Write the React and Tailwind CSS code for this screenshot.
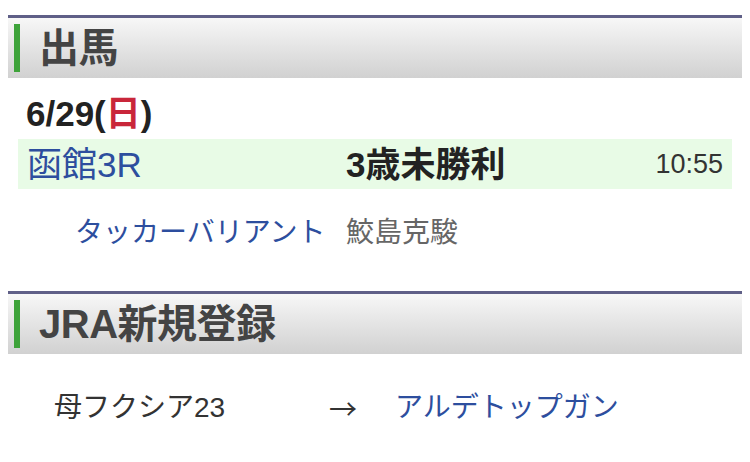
import React from 'react';

const jp = { fontFamily: '"Liberation Sans", "Noto Sans CJK JP", sans-serif' };

function SectionHeader({ title }) {
  return (
    <div className="h-[63px] border-t-[3px] border-[#5f5f87] bg-gradient-to-b from-[#f7f7f7] to-[#d1d1d1] flex items-center">
      <div className="ml-[6px] w-[6px] h-[48px] bg-[#3ea33a]" />
      <h2 className="ml-[19px] text-[40px] leading-none font-bold text-[#444444] tracking-[-0.5px]">{title}</h2>
    </div>
  );
}

export default function App() {
  return (
    <div className="w-[750px] h-[462px] bg-white pt-[15px] px-2 overflow-hidden" style={jp}>
      {/* 出馬 */}
      <SectionHeader title="出馬" />
      <div className="pl-[18px] pt-[16px] pb-[5px] text-[35px] leading-[40px] font-bold text-[#222222]">
        6/29(<span className="text-[#c9263a]">日</span>)
      </div>
      <div className="mx-[10px] h-[50px] bg-[#e8fbe6] flex items-center">
        <a className="w-[328px] pl-[9px] text-[35px] leading-none text-[#2d4e9e]">函館3R</a>
        <span className="flex-1 text-[35px] leading-none font-bold text-[#222222]">3歳未勝利</span>
        <span className="pr-[9px] text-[27px] leading-none text-[#333333]">10:55</span>
      </div>
      <div className="mx-[10px] pt-[24px] flex items-center leading-[40px]">
        <a className="w-[328px] pl-[57px] text-[28px] text-[#2d4e9e]">タッカーバリアント</a>
        <span className="text-[28px] text-[#666666]">鮫島克駿</span>
      </div>

      {/* JRA新規登録 */}
      <div className="mt-[38px]">
        <SectionHeader title="JRA新規登録" />
      </div>
      <div className="pt-[34px] pl-[46px] flex items-center leading-[40px]">
        <span className="w-[275px] text-[28px] text-[#333333]">母フクシア23</span>
        <span className="w-[66px] text-[28px] text-[#333333] font-['Noto_Sans_CJK_JP',sans-serif]">→</span>
        <a className="text-[28px] text-[#2d4e9e]">アルデトップガン</a>
      </div>
    </div>
  );
}
